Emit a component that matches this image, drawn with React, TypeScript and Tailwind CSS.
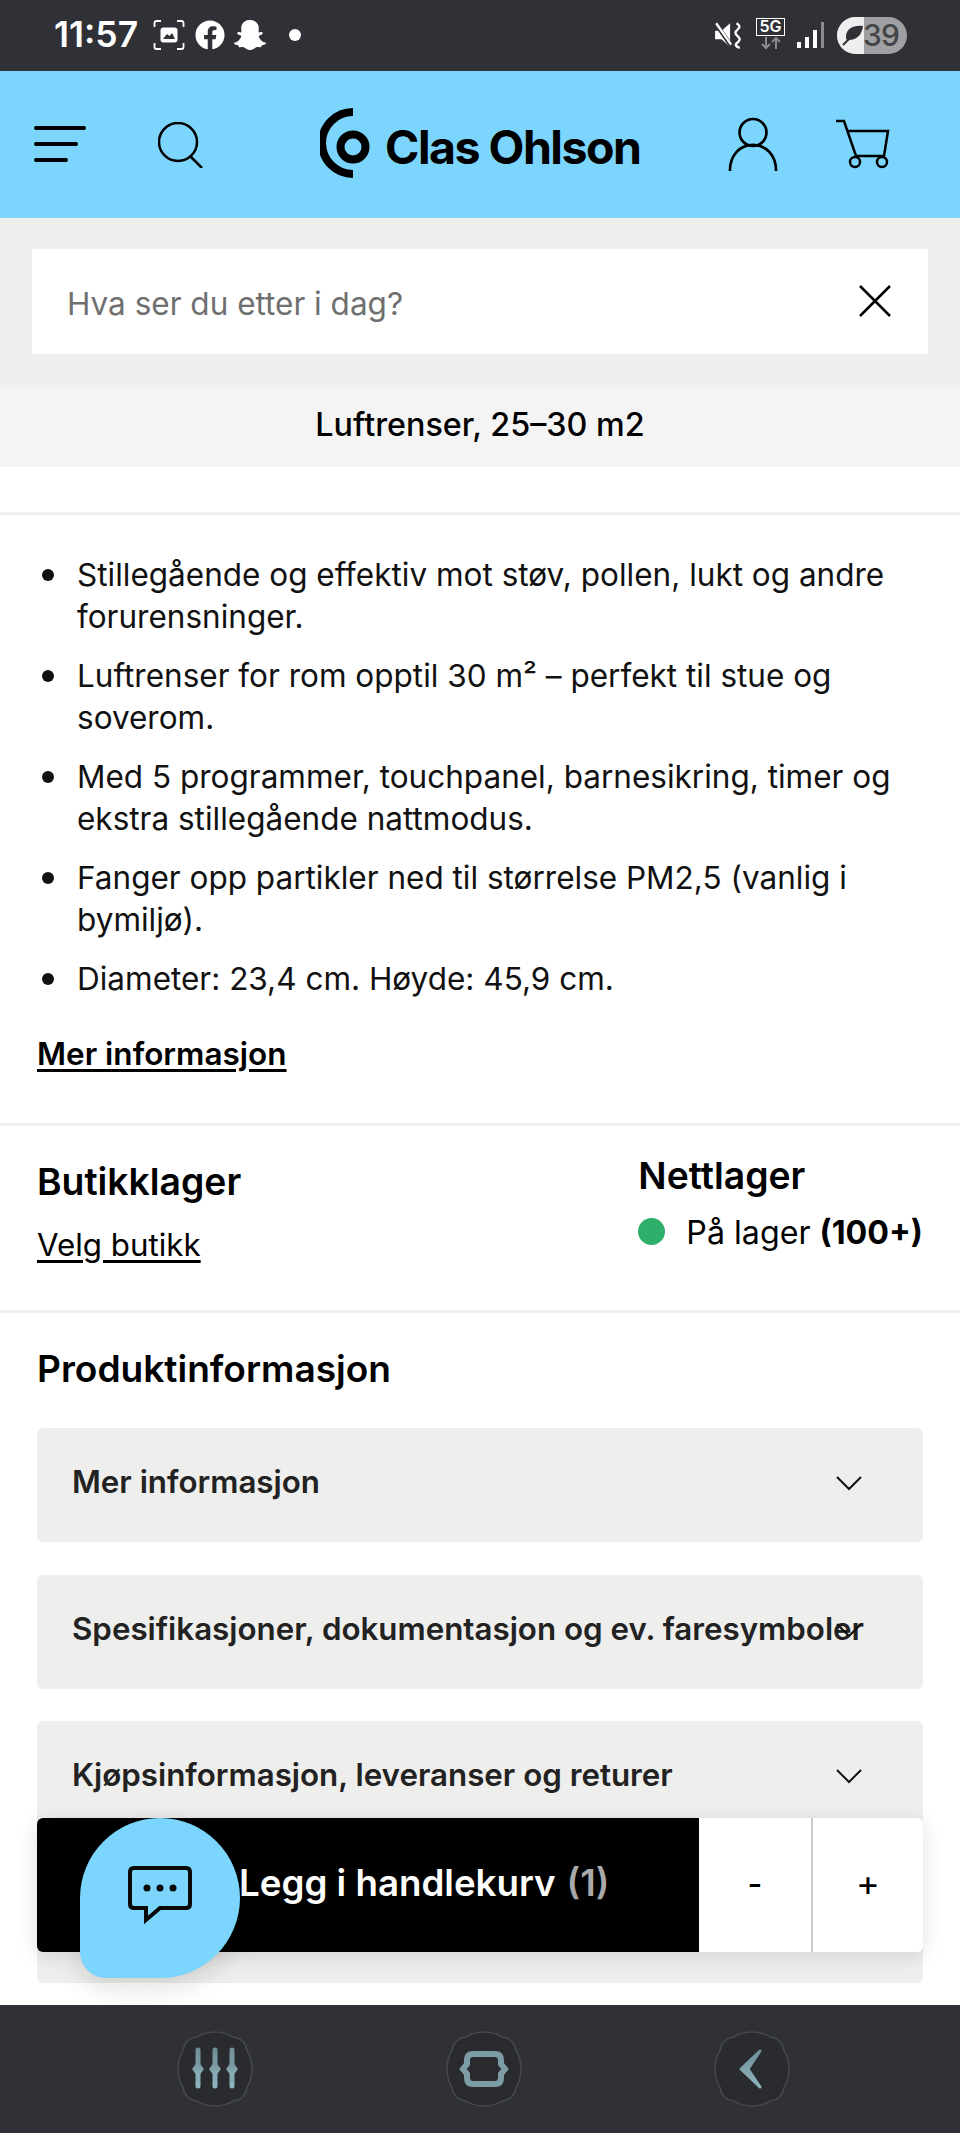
import React from "react";
import { FaFacebook, FaSnapchatGhost } from "react-icons/fa";

const font = { fontFamily: "Inter, 'Liberation Sans', sans-serif" };

function Chevron({ className = "" }: { className?: string }) {
  return (
    <svg width="28" height="16" viewBox="0 0 28 16" fill="none" stroke="#111" strokeWidth="2" className={className}>
      <path d="M2 2 L14 14 L26 2" />
    </svg>
  );
}

function StatusBar() {
  return (
    <div className="h-[71px] bg-[#303136] flex items-center pl-[54px] pr-[53px] text-white shrink-0">
      <span className="text-[35.5px] font-semibold leading-none mt-[-2px]">11:57</span>
      <svg width="32" height="32" viewBox="0 0 32 32" fill="none" className="ml-[15px] mt-[-1px]">
        <path d="M8 2H3.500Q1.500 2 1.500 4V8M24 2H28.500Q30.500 2 30.500 4V8M8 30H3.500Q1.500 30 1.500 28V24M24 30H28.500Q30.500 30 30.500 28V24" stroke="#fff" strokeWidth="1.800" />
        <rect x="7.500" y="8.500" width="17" height="15" rx="3" fill="#fff" />
        <path d="M10 20L14 15L16.500 17L19 14L22 20Z" fill="#303136" />
      </svg>
      <FaFacebook size={30} className="ml-[10px] mt-[-1px]" />
      <FaSnapchatGhost size={32} className="ml-[9px] mt-[-1px]" />
      <span className="ml-[23px] w-[12px] h-[12px] rounded-full bg-white mt-[-1px]" />
      <span className="flex-1" />
      <svg width="30" height="30" viewBox="0 0 28 28" className="mt-[-1px]">
        <path d="M1 10H7L15 3V25L7 18H1Z" fill="#fff" />
        <path d="M2 4L16 24" stroke="#303136" strokeWidth="4" />
        <path d="M2 3L16 23" stroke="#fff" strokeWidth="2.200" />
        <path d="M21 3Q26 6 22 9T22 15T22 21T24 26" stroke="#fff" strokeWidth="2.200" fill="none" />
      </svg>
      <div className="ml-[12px] mt-[-3px] w-[29px] flex flex-col items-center">
        <span className="w-[29px] h-[18px] border-[1.5px] border-white text-[16px] leading-[15px] font-semibold text-center">5G</span>
        <svg width="22" height="14" viewBox="0 0 22 14" fill="none" stroke="#8a8c90" strokeWidth="2">
          <path d="M6 1V12M2 8L6 12L10 8M16 13V2M12 6L16 2L20 6" />
        </svg>
      </div>
      <div className="ml-[12px] flex items-end gap-[4px] h-[26px] mt-[-1px]">
        <span className="w-[4px] h-[6px] bg-white" />
        <span className="w-[4px] h-[11px] bg-white" />
        <span className="w-[4px] h-[18px] bg-white" />
        <span className="w-[3px] h-[26px] bg-[#8a8c90]" />
      </div>
      <div className="ml-[13px] relative w-[70px] h-[37px] rounded-full bg-[#a0a0a2] overflow-hidden flex items-center mt-[-1px]">
        <span className="absolute left-0 top-0 h-full w-[27px] bg-[#eeeeee]" />
        <svg width="22" height="22" viewBox="0 0 22 22" className="relative ml-[5px] shrink-0">
          <path d="M21 2C12 1 4 4 4 13C4 14 4 15 5 16C14 17 20 11 21 2Z" fill="#303136" />
          <path d="M1 21L13 9" stroke="#303136" strokeWidth="2" />
        </svg>
        <span className="relative text-[30px] font-medium text-[#444548] leading-none tracking-tight ml-[-1px]">39</span>
      </div>
    </div>
  );
}

function Header() {
  return (
    <div className="h-[147px] bg-[#7bd5fd] flex items-center shrink-0 pl-[34px] text-black relative">
      <svg width="52" height="38" viewBox="0 0 52 38" fill="none" stroke="#000" strokeWidth="4" strokeLinecap="round" className="mt-[-2px]">
        <path d="M2 3H50M2 19H42M2 35H32" />
      </svg>
      <svg width="46" height="46" viewBox="0 0 46 46" fill="none" stroke="#000" strokeWidth="2.500" className="ml-[72px] mt-[1px]">
        <circle cx="20" cy="20" r="19" />
        <path d="M32 34L44 46" />
      </svg>
      <svg width="70" height="70" viewBox="0 0 70 70" className="ml-[116px] mt-[-3px]" fill="none">
        <path d="M33 4A30 30 0 0 0 33 66" stroke="#000" strokeWidth="8" />
        <circle cx="33" cy="39" r="12.500" stroke="#000" strokeWidth="8" />
      </svg>
      <span className="ml-[-5px] text-[46.5px] font-bold tracking-[-1.500px] leading-none mt-[6px]">Clas Ohlson</span>
      <span className="flex-1" />
      <svg width="50" height="54" viewBox="0 0 52 56" fill="none" stroke="#000" strokeWidth="2.800" className="mt-[-1px]">
        <circle cx="26" cy="16" r="14" />
        <path d="M2 56C2 40 12 29 26 29S50 40 50 56" />
      </svg>
      <svg width="54" height="50" viewBox="0 0 54 50" fill="none" stroke="#000" strokeWidth="2.500" className="ml-[58px] mr-[70px] mt-[-2px]">
        <path d="M0 2H8L20 37H48L52 12H11" />
        <circle cx="19" cy="43" r="5" />
        <circle cx="46" cy="43" r="5" />
      </svg>
    </div>
  );
}

function Accordion({ title }: { title: string }) {
  return (
    <div className="h-[114px] bg-[#eeeeec] rounded-md flex items-center pl-[35px] pb-[5px] relative shrink-0">
      <span className="text-[31.3px] font-semibold text-[#222] whitespace-nowrap">{title}</span>
      <Chevron className="absolute right-[60px] top-[47px]" />
    </div>
  );
}

function NavButton({ children }: { children: React.ReactNode }) {
  return (
    <svg width="76" height="76" viewBox="0 0 76 76" fill="none">
      <defs>
        <linearGradient id="navg" x1="0" y1="0" x2="0" y2="1">
          <stop offset="0" stopColor="#6f8f99" />
          <stop offset="1" stopColor="#8fb4bd" />
        </linearGradient>
      </defs>
      <path
        d="M57.100 6.300A14 14 0 0 1 69.700 18.900A37 37 0 0 1 69.700 57.100A14 14 0 0 1 57.100 69.700A37 37 0 0 1 18.900 69.700A14 14 0 0 1 6.300 57.100A37 37 0 0 1 6.300 18.900A14 14 0 0 1 18.900 6.300A37 37 0 0 1 57.100 6.300Z"
        fill="#292b2f"
        stroke="#45484d"
        strokeWidth="1.500"
      />
      {children}
    </svg>
  );
}

const bullets = [
  "Stillegående og effektiv mot støv, pollen, lukt og andre forurensninger.",
  "Luftrenser for rom opptil 30 m² – perfekt til stue og soverom.",
  "Med 5 programmer, touchpanel, barnesikring, timer og ekstra stillegående nattmodus.",
  "Fanger opp partikler ned til størrelse PM2,5 (vanlig i bymiljø).",
  "Diameter: 23,4 cm. Høyde: 45,9 cm.",
];

export default function App() {
  return (
    <div className="w-[960px] h-[2133px] flex flex-col bg-white overflow-hidden text-black" style={font}>
      <StatusBar />
      <Header />
      <div className="h-[167px] bg-[#eeeeec] px-[32px] pt-[31px] shrink-0">
        <div className="h-[105px] bg-white flex items-center pl-[35px] pr-[37px] justify-between">
          <span className="text-[31.5px] text-[#6f6f6f] mt-[4px]">Hva ser du etter i dag?</span>
          <svg width="32" height="32" viewBox="0 0 32 32" stroke="#000" strokeWidth="2.500" className="mt-[-2px]">
            <path d="M1 1L31 31M31 1L1 31" />
          </svg>
        </div>
      </div>
      <div className="h-[82px] bg-[#f4f4f4] flex items-center justify-center text-[32.3px] font-medium shrink-0 pb-[2px]">Luftrenser, 25–30 m2</div>
      <div className="flex-1 relative overflow-hidden">
        <div className="h-[45px]" />
        <div className="h-[3px] bg-[#eeeeee]" />
        <ul className="pl-[42px] pr-[30px] pt-[39px] text-[31.5px] leading-[42px] text-[#111] flex flex-col gap-[17px]">
          {bullets.map((b) => (
            <li key={b} className="flex">
              <span className="w-[12px] h-[12px] rounded-full bg-[#111] mt-[15px] mr-[23px] shrink-0" />
              <span>{b}</span>
            </li>
          ))}
        </ul>
        <div className="pl-[37px] mt-[33px] text-[31.5px] font-semibold underline underline-offset-4 leading-[42px]">Mer informasjon</div>
        <div className="h-[3px] bg-[#eeeeee] mt-[48px]" />
        <div className="h-[184px] pl-[37px] pr-[37px] flex justify-between">
          <div className="pt-[34px]">
            <div className="text-[37.3px] font-semibold leading-[44px]">Butikklager</div>
            <div className="text-[31.3px] underline underline-offset-4 mt-[20px] leading-[42px]">Velg butikk</div>
          </div>
          <div className="pt-[28px]">
            <div className="text-[37.3px] font-semibold leading-[44px]">Nettlager</div>
            <div className="flex items-center mt-[12px]">
              <span className="w-[27px] h-[27px] rounded-full bg-[#2fb06a] mt-[-2px]" />
              <span className="text-[32.2px] ml-[21px] leading-[42px] mt-[2px]">På lager <b className="font-bold">(100+)</b></span>
            </div>
          </div>
        </div>
        <div className="h-[3px] bg-[#eeeeee]" />
        <div className="pl-[37px] pt-[34px] text-[37.1px] font-semibold leading-[44px]">Produktinformasjon</div>
        <div className="mx-[37px] mt-[37px] flex flex-col gap-[32.5px]">
          <Accordion title="Mer informasjon" />
          <Accordion title="Spesifikasjoner, dokumentasjon og ev. faresymboler" />
          <Accordion title="Kjøpsinformasjon, leveranser og returer" />
          <div className="h-[115px] bg-[#eeeeec] rounded-md" />
        </div>
        <div className="absolute left-[37px] top-[1351px] w-[886px] h-[134px] flex rounded-md overflow-hidden shadow-[0_4px_20px_rgba(0,0,0,0.12)]">
          <div className="w-[662px] bg-black text-white flex items-center pl-[202px] pb-[4px] text-[36.7px] font-semibold">
            Legg i handlekurv <span className="text-[#a9a9a9] ml-[11px]">(1)</span>
          </div>
          <div className="w-[114px] bg-white flex items-center justify-center pb-[3px] text-[32px] font-medium border-r-2 border-[#cccccc]">-</div>
          <div className="flex-1 bg-white flex items-center justify-center pb-[5px] text-[36px] font-normal">+</div>
        </div>
        <div className="absolute left-[80px] top-[1351px] w-[160px] h-[160px] bg-[#7bd5fd] rounded-[80px] rounded-bl-[26px] flex items-center justify-center shadow-[0_10px_25px_rgba(0,0,0,0.12)]">
          <svg width="64" height="60" viewBox="0 0 64 60" fill="none" className="mt-[-5px]">
            <path d="M6 2H58Q62 2 62 6V38Q62 42 58 42H32L18 54V42H6Q2 42 2 38V6Q2 2 6 2Z" stroke="#0a0a0a" strokeWidth="4" />
            <circle cx="19" cy="22" r="3.500" fill="#0a0a0a" />
            <circle cx="32" cy="22" r="3.500" fill="#0a0a0a" />
            <circle cx="45" cy="22" r="3.500" fill="#0a0a0a" />
          </svg>
        </div>
      </div>
      <div className="h-[128px] bg-[#303136] shrink-0 flex items-center pl-[177px] pr-[170px] justify-between">
        <NavButton>
          <path d="M21 19V55M38 19V55M55 19V55" stroke="url(#navg)" strokeWidth="5" strokeLinecap="round" />
          <path d="M21 30L15 38L21 46L27 38ZM38 30L32 38L38 46L44 38ZM55 30L49 38L55 46L61 38Z" fill="url(#navg)" />
        </NavButton>
        <NavButton>
          <path d="M27 23H49Q55 23 55 29V33L59 38L55 43V47Q55 53 49 53H27Q21 53 21 47V43L17 38L21 33V29Q21 23 27 23Z" stroke="#7c9ca6" strokeWidth="6" />
        </NavButton>
        <NavButton>
          <path d="M46 20L27 38L46 56L34 38Z" fill="url(#navg)" stroke="url(#navg)" strokeWidth="3" strokeLinejoin="round" />
        </NavButton>
      </div>
    </div>
  );
}
